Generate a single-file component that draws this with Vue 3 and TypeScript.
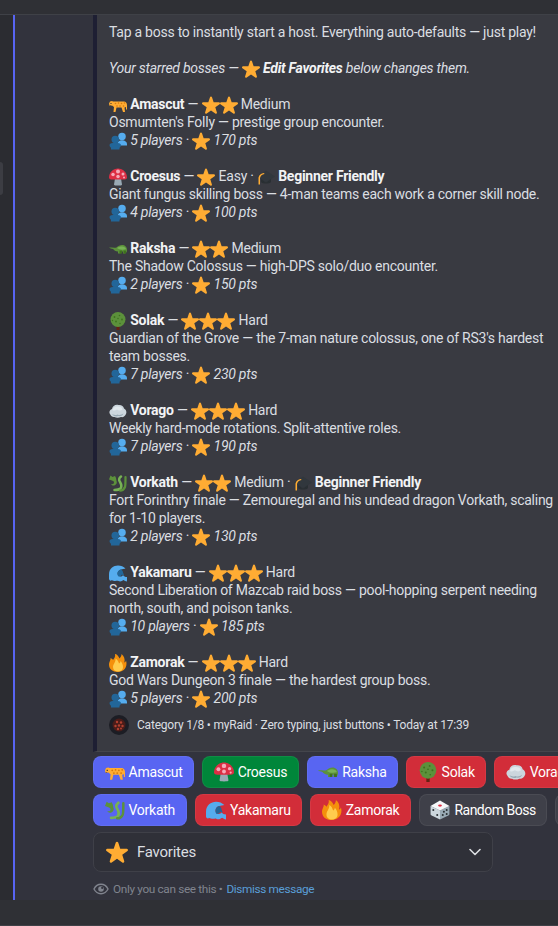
<script setup lang="ts">
type Boss = {
  name: string;
  icon: string;
  stars: number;
  level: string;
  beginner?: boolean;
  desc: string;
  players: number;
  pts: number;
};

const bosses: Boss[] = [
  { name: 'Amascut', icon: 'leopard', stars: 2, level: 'Medium', desc: "Osmumten's Folly — prestige group encounter.", players: 5, pts: 170 },
  { name: 'Croesus', icon: 'mushroom', stars: 1, level: 'Easy', beginner: true, desc: 'Giant fungus skilling boss — 4-man teams each work a corner skill node.', players: 4, pts: 100 },
  { name: 'Raksha', icon: 'croc', stars: 2, level: 'Medium', desc: 'The Shadow Colossus — high-DPS solo/duo encounter.', players: 2, pts: 150 },
  { name: 'Solak', icon: 'tree', stars: 3, level: 'Hard', desc: "Guardian of the Grove — the 7-man nature colossus, one of RS3's hardest team bosses.", players: 7, pts: 230 },
  { name: 'Vorago', icon: 'rock', stars: 3, level: 'Hard', desc: 'Weekly hard-mode rotations. Split-attentive roles.', players: 7, pts: 190 },
  { name: 'Vorkath', icon: 'dragon', stars: 2, level: 'Medium', beginner: true, desc: 'Fort Forinthry finale — Zemouregal and his undead dragon Vorkath, scaling for 1-10 players.', players: 2, pts: 130 },
  { name: 'Yakamaru', icon: 'wave', stars: 3, level: 'Hard', desc: 'Second Liberation of Mazcab raid boss — pool-hopping serpent needing north, south, and poison tanks.', players: 10, pts: 185 },
  { name: 'Zamorak', icon: 'fire', stars: 3, level: 'Hard', desc: 'God Wars Dungeon 3 finale — the hardest group boss.', players: 5, pts: 200 }
];

const rows = [
  [
    { label: 'Amascut', icon: 'leopard', kind: 'blue' },
    { label: 'Croesus', icon: 'mushroom', kind: 'green' },
    { label: 'Raksha', icon: 'croc', kind: 'blue' },
    { label: 'Solak', icon: 'tree', kind: 'red' },
    { label: 'Vorago', icon: 'rock', kind: 'red' }
  ],
  [
    { label: 'Vorkath', icon: 'dragon', kind: 'blue' },
    { label: 'Yakamaru', icon: 'wave', kind: 'red' },
    { label: 'Zamorak', icon: 'fire', kind: 'red' },
    { label: 'Random Boss', icon: 'dice', kind: 'grey' },
    { label: 'Edit', icon: '', kind: 'grey' }
  ]
];
</script>

<template>
  <div class="page">
    <!-- emoji sheet -->
    <svg class="sheet" aria-hidden="true">
      <symbol id="star" viewBox="1 1 34 34">
        <path fill="#ffac33" d="M27.287 34.627c-.404 0-.806-.124-1.152-.371L18 28.422l-8.135 5.834c-.693.496-1.623.496-2.312-.008-.689-.499-.979-1.385-.721-2.194l3.034-9.792-8.062-5.681c-.685-.505-.97-1.393-.708-2.203.264-.808 1.016-1.357 1.866-1.363L12.947 13l3.179-9.549c.268-.809 1.023-1.353 1.874-1.353.851 0 1.606.545 1.875 1.353L23 13l10.036.015c.853.006 1.606.556 1.867 1.363.263.81-.022 1.698-.708 2.203l-8.062 5.681 3.034 9.792c.26.809-.033 1.695-.72 2.194-.347.254-.753.379-1.160.379z" />
      </symbol>
      <symbol id="busts" viewBox="0 0 36 36">
        <circle cx="26" cy="9" r="7.500" fill="#55acee" />
        <path fill="#55acee" d="M16 26c0-6 4-9.500 10-9.500S36 20 36 24v3H16z" />
        <circle cx="12.500" cy="15" r="7.500" fill="#269" />
        <path fill="#269" d="M4 35v-3c0-2-3-2-3-6 0-3 5-4.500 11.500-4.500S24 23 24 26c0 4-3 4-3 6v3z" />
      </symbol>
      <symbol id="cap" viewBox="0 0 36 36">
        <path fill="#31373d" d="M18 5 36 17 18 29 0 17z" />
        <path fill="#292f33" d="M8 22v6c3 4 17 4 20 0v-6l-10 7z" />
        <path fill="#ffac33" d="M3 19c1-5 5-8 11-9l1 2c-5 1-8 3-9 8v13H3z" />
      </symbol>
      <symbol id="leopard" viewBox="0 0 36 36">
        <path fill="#ffac33" d="M0 15l2-4 4-1 2 1h22c3 0 6 3 6 7v9h-2v-5l-3 1 1 9h-4l-3-9H15l-2 9H9l1-10-4-3-5 1z" />
        <g fill="#d87a0c">
          <circle cx="13" cy="15" r="1.600" /><circle cx="19" cy="14" r="1.600" /><circle cx="25" cy="15" r="1.600" /><circle cx="31" cy="14" r="1.600" />
          <circle cx="16" cy="20" r="1.600" /><circle cx="22" cy="20" r="1.600" /><circle cx="29" cy="20" r="1.600" />
        </g>
        <path fill="#292f33" d="M3 14h2v2H3zM1 18h3v1H1z" />
      </symbol>
      <symbol id="mushroom" viewBox="0 0 36 36">
        <path fill="#99aab5" d="M12 21h12l2 12c0 2-3 2-8 2s-8 0-8-2z" />
        <path fill="#dd2e44" d="M18 1C8 1 0 9 0 19c0 3 3 4 6 4h24c3 0 6-1 6-4C36 9 28 1 18 1z" />
        <g fill="#f4abba">
          <circle cx="18" cy="7" r="4" /><circle cx="8" cy="13" r="3.500" /><circle cx="28" cy="12" r="3" /><circle cx="18" cy="17" r="3.500" /><circle cx="30" cy="19" r="2" />
        </g>
      </symbol>
      <symbol id="croc" viewBox="0 0 36 36">
        <path fill="#5c913b" d="M0 15c6 0 11 1 15 0 3-3 7-5 11-5 6 0 10 4 10 10 0 4-2 7-5 7h-3v-4h-5v4h-5v-4c-5 0-8-3-10-5-3-1-6-1-8-3z" />
        <path fill="#3e721d" d="M21 21h5v6h-5zM29 21h5v6h-5z" />
        <path fill="#77b255" d="M16 16c3-2 6-3 10-3 4 0 7 2 8 5-5 2-13 2-18-2z" />
      </symbol>
      <symbol id="tree" viewBox="0 0 36 36">
        <path fill="#662113" d="M15 26h6v10h-6z" />
        <circle cx="18" cy="15" r="15" fill="#5c913b" />
        <g fill="#3e721d">
          <circle cx="11" cy="10" r="1.800" /><circle cx="21" cy="7" r="1.600" /><circle cx="26" cy="15" r="1.800" /><circle cx="14" cy="19" r="1.800" /><circle cx="22" cy="23" r="1.500" /><circle cx="18" cy="13" r="1.500" /><circle cx="7" cy="17" r="1.400" />
        </g>
      </symbol>
      <symbol id="rock" viewBox="0 0 36 36">
        <path fill="#ccd6dd" d="M2 24c-3-4 0-9 4-10 1-6 7-10 13-8 5-1 10 2 11 7 4 2 6 7 4 11-2 5-6 7-10 6-4 2-10 2-13 0-4 1-7-2-9-6z" />
        <path fill="#e1e8ed" d="M7 16c1-5 6-8 11-7 5 0 8 2 9 6-4 3-8 2-11 0-3 2-6 3-9 1z" />
        <path fill="#99aab5" d="M6 24c4 2 7 3 11 1 4 2 8 1 12-2-1 4-6 6-10 5-4 2-10 1-13-4z" />
      </symbol>
      <symbol id="dragon" viewBox="0 0 36 36">
        <path fill="none" stroke="#77b255" stroke-width="5" stroke-linecap="round" d="M24 5c-4 3-5 7-2 11 3 5 4 9 1 13-3 3-8 3-12 3" />
        <path fill="none" stroke="#5c913b" stroke-width="4.500" stroke-linecap="round" d="M33 6c0 8 0 17-1 20-2 5-6 7-10 7" />
        <path fill="#5c913b" d="M3 3l4 3 5-2 2 4 1 6c2 4-1 9-6 9-2 0-4-1-5-3 3 1 6 0 6-3 0-2-1-3-4-4L0 11z" />
      </symbol>
      <symbol id="wave" viewBox="0 0 36 36">
        <path fill="#55acee" d="M5 33a4 4 0 0 1-5-3V21C0 9 9 3 18 3c6 0 11 2 15 6l-9 2c-4 1-7 4-7 8 0 3 2 6 6 6 2 0 4-1 5-3 2 3 4 4 8 4v9c-3 0-5-2-7-3-3 2-6 4-10 2-3-2-6 2-14-2z" />
        <path fill="#269" d="M17 19c0-4 3-7 7-8 2 1 4 3 4 6l2 5c-2 1-3 0-4-1-1 2-3 4-7 4-2-2-2-4-2-6z" />
      </symbol>
      <symbol id="fire" viewBox="0 0 36 36">
        <path fill="#f4900c" d="M35 19c0-2.100-.350-4.100-.990-6-.290 1.400-1.400 4-3.300 4 1.800-7-.600-13-5.700-17-.130 3.500-.900 5.700-4 9-2-5-6-9-9-9 1 5-1 8-4 12-1-2-3-3-5-4 .500 3-1 5-2 8-.700 1.900-1 3-1 5 0 9.400 7.600 15 17 15s18-5.600 18-17z" />
        <path fill="#ffcc4d" d="M28 26c0 6-4.500 9-10 9S8 32 8 26s6-10 5-17c4 2 6 6 7 10 2-1 3-3 3-5 3 3 5 7 5 12z" />
      </symbol>
      <symbol id="dice" viewBox="0 0 36 36">
        <path fill="#ccd6dd" d="M1 11l17 8v16L3 28c-1-.500-2-2-2-3z" />
        <path fill="#99aab5" d="M35 11l-17 8v16l15-7c1-.500 2-2 2-3z" />
        <path fill="#f5f8fa" d="M18 1l17 10-17 8L1 11z" />
        <ellipse cx="18" cy="10" rx="3.500" ry="2" fill="#dd2e44" />
        <g fill="#292f33">
          <circle cx="6" cy="18" r="1.800" /><circle cx="13" cy="27" r="1.800" /><circle cx="23" cy="27" r="1.800" /><circle cx="30" cy="18" r="1.800" /><circle cx="25" cy="21" r="1.800" /><circle cx="30" cy="25" r="1.800" />
        </g>
      </symbol>
    </svg>

    <div class="top-bar"></div>
    <div class="side-tab"></div>

    <div class="main">
      <div class="gutter"></div>
      <div class="message">
        <div class="embed">
          <div class="body">
            <p class="para">Tap a boss to instantly start a host. Everything auto-defaults — just play!</p>
            <p class="para">
              <em>Your starred bosses — <svg class="em"><use href="#star" /></svg> <strong>Edit Favorites</strong> below changes them.</em>
            </p>
            <p v-for="boss in bosses" :key="boss.name" class="para">
              <svg class="em"><use :href="`#${boss.icon}`" /></svg> <strong>{{ boss.name }}</strong> — <svg v-for="n in boss.stars" :key="n" class="em"><use href="#star" /></svg> {{ boss.level }}<template v-if="boss.beginner"> · <svg class="em"><use href="#cap" /></svg> <strong>Beginner Friendly</strong></template>
              <br />
              {{ boss.desc }}
              <br />
              <svg class="em"><use href="#busts" /></svg> <em>{{ boss.players }} players</em> · <svg class="em"><use href="#star" /></svg> <em>{{ boss.pts }} pts</em>
            </p>
          </div>
          <div class="embed-footer">
            <svg class="avatar" viewBox="0 0 20 20">
              <circle cx="10" cy="10" r="10" fill="#1c1d24" />
              <circle cx="10" cy="10" r="6.500" fill="#4a1d1a" />
              <g fill="#b3402f">
                <circle cx="8" cy="7" r="1.200" /><circle cx="12" cy="7.500" r="1.200" /><circle cx="6.500" cy="11" r="1.200" /><circle cx="10" cy="10.500" r="1.200" /><circle cx="13.500" cy="11" r="1.200" /><circle cx="9" cy="14" r="1.200" /><circle cx="12" cy="13.500" r="1" />
              </g>
            </svg>
            <span>Category 1/8 • myRaid · Zero typing, just buttons • Today at 17:39</span>
          </div>
        </div>

        <div class="actions">
          <div v-for="(row, i) in rows" :key="i" class="btn-row">
            <button v-for="b in row" :key="b.label" class="btn" :class="b.kind">
              <svg v-if="b.icon" class="btn-em"><use :href="`#${b.icon}`" /></svg>
              {{ b.label }}
            </button>
          </div>
        </div>

        <div class="select">
          <svg class="select-star"><use href="#star" /></svg>
          <span class="select-label">Favorites</span>
          <svg class="chevron" viewBox="0 0 12 8" fill="none" stroke="#dbdee1" stroke-width="1.600" stroke-linecap="round" stroke-linejoin="round">
            <path d="M1 1.500 6 6.500l5-5" />
          </svg>
        </div>

        <div class="ephemeral">
          <svg viewBox="0 0 16 16" class="eye">
            <path fill="none" stroke="#80848e" stroke-width="1.400" d="M1 8c1.500-3 4-4.700 7-4.700S13.500 5 15 8c-1.500 3-4 4.700-7 4.700S2.500 11 1 8z" />
            <circle cx="8" cy="8" r="2.800" fill="#80848e" />
            <circle cx="9.200" cy="6.900" r="1.100" fill="#32333d" />
          </svg>
          <span>Only you can see this •</span>
          <span class="dismiss">Dismiss message</span>
        </div>
      </div>
    </div>

    <div class="bottom"></div>
  </div>
</template>

<style scoped>
.page {
  position: relative;
  display: flex;
  flex-direction: column;
  width: 558px;
  height: 926px;
  overflow: hidden;
  background: #2f3035;
  color: #dbdee1;
  font-family: Roboto, sans-serif;
  font-size: 14px;
  line-height: 18px;
  letter-spacing: -0.25px;
}

.sheet {
  position: absolute;
  width: 0;
  height: 0;
}

.top-bar {
  flex: none;
  height: 14px;
  background: #2f3035;
  border-bottom: 1px solid #3f4147;
}

.side-tab {
  position: absolute;
  left: 0;
  top: 162px;
  width: 3px;
  height: 33px;
  border-radius: 0 4px 4px 0;
  background: #3c3d43;
}

.main {
  display: flex;
  flex: none;
  height: 885px;
}

.gutter {
  flex: none;
  width: 13px;
  background: #2b2c31;
}

.message {
  flex: 1;
  min-width: 0;
  padding-left: 78px;
  border-left: 2px solid #5865f2;
  background: #32333d;
}

.embed {
  width: 600px;
  height: 737px;
  box-sizing: border-box;
  padding: 8px 12px 0;
  border-left: 4px solid #1e1f33;
  border-bottom: 1px solid #44454c;
  background: #393a41;
}

.body {
  width: 445px;
}

.para {
  margin: 0 0 18px;
}

.para:last-child {
  margin-bottom: 0;
}

strong {
  font-weight: 700;
  color: #f2f3f5;
}

em {
  font-style: italic;
}

.em {
  width: 18px;
  height: 18px;
  margin: -4px 0;
  vertical-align: -1px;
}

.embed-footer {
  display: flex;
  align-items: center;
  gap: 8px;
  margin-top: 8px;
  font-size: 12px;
  letter-spacing: -0.2px;
}

.avatar {
  flex: none;
  width: 20px;
  height: 20px;
}

.actions {
  display: flex;
  flex-direction: column;
  gap: 6px;
  margin-top: 4px;
}

.btn-row {
  display: flex;
  gap: 8px;
}

.btn {
  display: flex;
  flex: none;
  align-items: center;
  gap: 4px;
  height: 32px;
  padding: 0 10.5px;
  box-sizing: border-box;
  border: 1px solid rgba(255, 255, 255, 0.06);
  border-radius: 8px;
  color: #fff;
  font-family: inherit;
  font-size: 14px;
  font-weight: 400;
  letter-spacing: inherit;
}

.btn-em {
  width: 20px;
  height: 20px;
}

.blue {
  background: #5865f2;
}

.green {
  background: #00863a;
}

.red {
  background: #d22d39;
}

.grey {
  background: #3f4049;
  letter-spacing: -0.5px;
}

.select {
  display: flex;
  align-items: center;
  width: 400px;
  height: 40px;
  margin-top: 6px;
  padding: 0 13px 0 12px;
  box-sizing: border-box;
  border: 1px solid #3f4048;
  border-radius: 8px;
  background: #2f3038;
  font-size: 15px;
}

.select-star {
  width: 22px;
  height: 22px;
}

.select-label {
  flex: 1;
  margin-left: 9px;
}

.chevron {
  width: 12px;
  height: 8px;
  margin-right: -2px;
}

.ephemeral {
  display: flex;
  align-items: center;
  gap: 4px;
  margin-top: 8px;
  font-size: 11.8px;
  letter-spacing: -0.35px;
  color: #80848e;
}

.eye {
  width: 16px;
  height: 16px;
}

.dismiss {
  color: #5a9fd8;
}

.bottom {
  flex: 1;
  border-bottom: 1px solid #3f4147;
}
</style>
